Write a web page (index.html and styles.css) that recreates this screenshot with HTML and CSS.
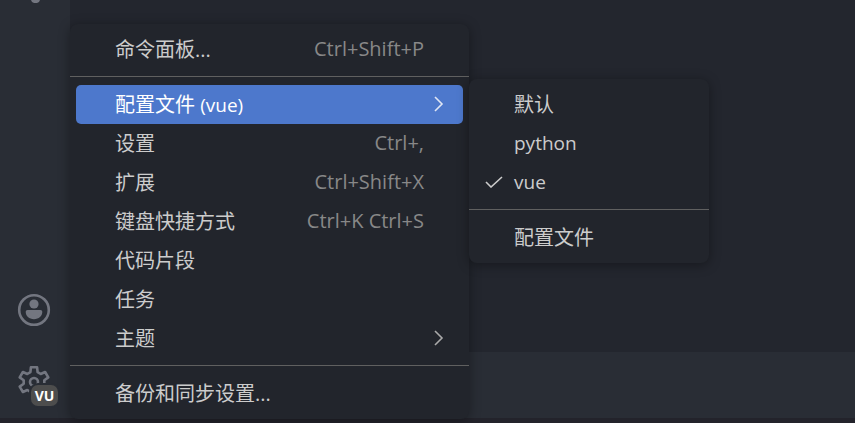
FILE: index.html
```html
<!DOCTYPE html>
<html lang="zh-CN">
<head>
    <meta charset="UTF-8">
    <meta name="viewport" content="width=device-width, initial-scale=1.0">
    <title>Visual Studio Code</title>
    <link rel="stylesheet" href="styles.css">
</head>
<body>
    <div class="workbench">
        <nav class="activity-bar">
            <svg class="extension-icon" viewBox="0 0 36 4" aria-hidden="true">
                <path d="M15 0h9l-1 2-2 1h-3l-2-1z"/>
            </svg>
            <div class="global-actions">
                <button class="action" aria-label="帐户">
                    <svg viewBox="0 0 36 36" aria-hidden="true">
                        <circle cx="18" cy="18" r="14.8" class="ring"/>
                        <circle cx="18" cy="12" r="4.6"/>
                        <path d="M11.5 18h13a1.8 1.8 0 0 1 1.8 1.8c0 4.4-3.4 7.4-8.3 7.4s-8.3-3-8.3-7.4a1.8 1.8 0 0 1 1.8-1.8z"/>
                    </svg>
                </button>
                <button class="action" aria-label="管理">
                    <svg viewBox="0 0 36 36" aria-hidden="true">
                        <path class="gear" d="M14.9 3.3h6.2l.5 4.8 3.1 1.9 4.4-2 3.2 5.4-4 2.8v3.6l4 2.8-3.2 5.4-4.4-2-3.1 1.9-.5 4.8h-6.2l-.5-4.8-3.1-1.9-4.4 2-3.2-5.4 4-2.8v-3.6l-4-2.8 3.2-5.4 4.4 2 3.1-1.9z"/>
                        <circle cx="18" cy="18" r="4" class="gear"/>
                    </svg>
                    <span class="badge">VU</span>
                </button>
            </div>
        </nav>
        <main class="editor"></main>
        <section class="panel"></section>
        <footer class="status-bar"></footer>
    </div>

    <ul class="menu main-menu">
        <li><button class="item">命令面板...<kbd>Ctrl+Shift+P</kbd></button></li>
        <li class="separator"></li>
        <li class="has-submenu">
            <button class="item active">
                <span>配置文件 <span class="profile">(vue)</span></span>
                <svg class="chevron" viewBox="0 0 10 16" aria-hidden="true"><path d="M1 1l7 7-7 7"/></svg>
            </button>
            <ul class="menu submenu">
                <li><button class="item">默认</button></li>
                <li><button class="item"><span class="profile">python</span></button></li>
                <li>
                    <button class="item">
                        <svg class="check" viewBox="0 0 18 12" aria-hidden="true"><path d="M1 6l5 5L17 1"/></svg>
                        <span class="profile">vue</span>
                    </button>
                </li>
                <li class="separator"></li>
                <li><button class="item">配置文件</button></li>
            </ul>
        </li>
        <li><button class="item">设置<kbd>Ctrl+,</kbd></button></li>
        <li><button class="item">扩展<kbd>Ctrl+Shift+X</kbd></button></li>
        <li><button class="item">键盘快捷方式<kbd>Ctrl+K Ctrl+S</kbd></button></li>
        <li><button class="item">代码片段</button></li>
        <li><button class="item">任务</button></li>
        <li>
            <button class="item">主题
                <svg class="chevron" viewBox="0 0 10 16" aria-hidden="true"><path d="M1 1l7 7-7 7"/></svg>
            </button>
        </li>
        <li class="separator"></li>
        <li><button class="item">备份和同步设置...</button></li>
    </ul>
</body>
</html>
```

FILE: styles.css
```css
* {
    box-sizing: border-box;
}

body {
    margin: 0;
    background: #23262e;
    color: #ccc;
    font-family: "Open Sans", "Noto Sans CJK SC", sans-serif;
    font-size: 20px;
    overflow: hidden;
}

button {
    border: 0;
    background: none;
    color: inherit;
    font: inherit;
}

.workbench {
    display: grid;
    grid-template-columns: 70px 1fr;
    grid-template-rows: 1fr 66px 5px;
    height: 100vh;
}

.activity-bar {
    grid-row: 1 / 3;
    display: flex;
    flex-direction: column;
    justify-content: space-between;
    align-items: center;
    padding-right: 2px;
    background: #292d35;
}

.extension-icon {
    width: 36px;
    height: 4px;
    fill: #737680;
}

.global-actions {
    display: flex;
    flex-direction: column;
}

.action {
    position: relative;
    display: flex;
    align-items: center;
    justify-content: center;
    width: 68px;
    height: 72px;
    padding: 0;
}

.action svg {
    width: 36px;
    height: 36px;
    fill: #737680;
}

.action .ring,
.action .gear {
    fill: none;
    stroke: #737680;
    stroke-width: 2.6;
    stroke-linejoin: round;
}

.badge {
    position: absolute;
    right: 10px;
    bottom: 12px;
    width: 27px;
    border-radius: 7px;
    background: #4d4d4d;
    box-shadow: 0 0 0 2px #292d35;
    color: #fff;
    font-size: 14px;
    font-weight: bold;
    line-height: 21px;
}

.panel {
    background: #292d35;
}

.status-bar {
    grid-column: 1 / 3;
    background: #23232b;
}

.menu {
    position: absolute;
    margin: 0;
    padding: 6px 0;
    border-radius: 8px;
    background: #22252c;
    box-shadow: 0 2px 12px rgba(0, 0, 0, 0.36);
    list-style: none;
}

.main-menu {
    left: 70px;
    bottom: 4px;
    width: 399px;
}

.has-submenu {
    position: relative;
}

.submenu {
    left: 100%;
    top: -6px;
    width: 240px;
}

.item {
    position: relative;
    display: flex;
    align-items: center;
    justify-content: space-between;
    width: calc(100% - 12px);
    height: 39px;
    margin: 0 6px;
    padding: 0 39px 2px;
    border-radius: 5px;
    text-align: left;
    white-space: nowrap;
}

.item.active {
    background: #4d78cc;
    color: #fff;
}

.item kbd {
    color: #888;
    font: inherit;
}

.profile {
    font-size: 19px;
}

.separator {
    height: 1px;
    margin: 7px 0 8px;
    background: #606060;
}

.chevron {
    position: absolute;
    right: 19px;
    width: 10px;
    height: 16px;
    color: #aaa;
}

.active .chevron {
    color: #e0e6f4;
}

.check {
    position: absolute;
    left: 10px;
    width: 18px;
    height: 12px;
}

.chevron path,
.check path {
    fill: none;
    stroke: currentColor;
    stroke-width: 1.6;
}
```
